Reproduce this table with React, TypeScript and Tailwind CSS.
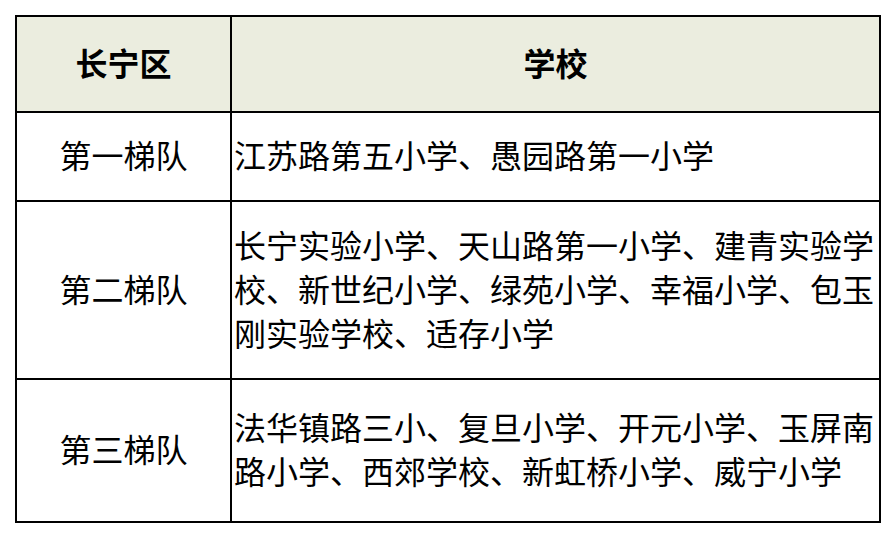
const rows = [
  { tier: '第一梯队', schools: '江苏路第五小学、愚园路第一小学', h: 'h-[89px]' },
  {
    tier: '第二梯队',
    schools: '长宁实验小学、天山路第一小学、建青实验学校、新世纪小学、绿苑小学、幸福小学、包玉刚实验学校、适存小学',
    h: 'h-[178px]',
  },
  {
    tier: '第三梯队',
    schools: '法华镇路三小、复旦小学、开元小学、玉屏南路小学、西郊学校、新虹桥小学、威宁小学',
    h: 'h-[143px]',
  },
];

export default function App() {
  return (
    <div
      className="w-[896px] h-[538px] bg-white pl-[15px] pt-[15px] text-black"
      style={{ fontFamily: '"Noto Sans CJK SC", "Noto Sans", sans-serif' }}
    >
      <table className="table-fixed border-collapse w-[866px] text-[32px] leading-[44px]">
        <colgroup>
          <col className="w-[215px]" />
          <col />
        </colgroup>
        <thead>
          <tr className="h-[96px] bg-[#ebeddf]">
            <th className="border-2 border-black text-center font-bold pb-[5px]">长宁区</th>
            <th className="border-2 border-black text-center font-bold pb-[5px]">学校</th>
          </tr>
        </thead>
        <tbody>
          {rows.map(r => (
            <tr key={r.tier} className={r.h}>
              <td className="border-2 border-black text-center align-middle pb-[5px]">{r.tier}</td>
              <td className="border-2 border-black text-left align-middle pl-[2px] pr-0 pb-[5px] break-all">
                {r.schools}
              </td>
            </tr>
          ))}
        </tbody>
      </table>
    </div>
  );
}
